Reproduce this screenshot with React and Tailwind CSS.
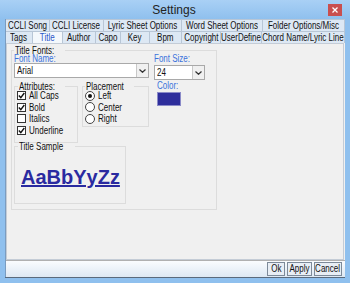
import React from "react";

const F = { fontFamily: '"Liberation Sans", Arial, sans-serif' };

function T({ children, c = false }) {
  return (
    <span className={`inline-block whitespace-nowrap scale-x-[0.8] ${c ? "origin-center" : "origin-left"}`}>
      {children}
    </span>
  );
}

function Check({ on, label }) {
  return (
    <div className="flex items-center h-[11.5px] gap-[3px]">
      <div className="w-[9px] h-[9px] border border-[#333] bg-white flex items-center justify-center">
        {on && (
          <svg width="7" height="7" viewBox="0 0 7 7">
            <path d="M0.8 3.5 L2.8 5.6 L6.3 1" stroke="#111" strokeWidth="1.4" fill="none" />
          </svg>
        )}
      </div>
      <span className="text-[10px] leading-[9px] text-[#111]"><T>{label}</T></span>
    </div>
  );
}

function Radio({ on, label }) {
  return (
    <div className="flex items-center h-[11.5px] gap-[3px]">
      <div className="w-[10px] h-[10px] rounded-full border border-[#444] bg-white flex items-center justify-center">
        {on && <div className="w-[4px] h-[4px] rounded-full bg-[#111]" />}
      </div>
      <span className="text-[10px] leading-[9px] text-[#111]"><T>{label}</T></span>
    </div>
  );
}

function Select({ value, w }) {
  return (
    <div className={`${w} h-[15px] bg-white border border-[#a9a9a9] flex items-center`}>
      <span className="flex-1 pl-[2px] text-[10px] leading-none text-[#111]"><T>{value}</T></span>
      <div className="w-[12px] h-[13px] border-l border-[#c8c8c8] bg-[#f0f0f0] flex items-center justify-center">
        <svg width="7" height="4" viewBox="0 0 7 4">
          <path d="M0.5 0.5 L3.5 3.3 L6.5 0.5" stroke="#333" strokeWidth="1.2" fill="none" />
        </svg>
      </div>
    </div>
  );
}

function Tab({ w, label, sel }) {
  return (
    <div
      className={`${w} h-[12px] flex items-center justify-center border-r border-t border-[#b8c6d6] text-[10px] leading-none ${
        sel ? "bg-[#f4f8fc] text-[#2b55c8]" : "bg-[#dde8f4] text-[#111]"
      }`}
    >
      <T c>{label}</T>
    </div>
  );
}

function Legend({ children, left = "left-[3px]" }) {
  return (
    <span className={`absolute ${left} top-[-4px] h-[8px] bg-[#f0f0f0] px-[1px] text-[10px] leading-[8px] text-[#111]`}>
      <T>{children}</T>
    </span>
  );
}

function Btn({ w, children }) {
  return (
    <div className={`${w} h-[14px] border border-[#7d8a99] bg-[#e8eef5] flex items-center justify-center text-[10px] leading-none text-[#111]`}>
      <T c>{children}</T>
    </div>
  );
}

export default function App() {
  return (
    <div style={F} className="w-[350px] h-[283px] bg-[#8fc0ee] flex flex-col overflow-hidden">
      <div className="h-[19px] shrink-0 relative flex items-center justify-center bg-gradient-to-b from-[#a9d0f5] to-[#8fc0ee]">
        <span className="text-[12px] leading-none text-[#222] ml-[-2px]">Settings</span>
        <div className="absolute right-[8px] top-[4px] w-[14px] h-[12px] bg-[#c94f4f] flex items-center justify-center">
          <svg width="6" height="6" viewBox="0 0 6 6">
            <path d="M0.5 0.5 L5.5 5.5 M5.5 0.5 L0.5 5.5" stroke="#fff" strokeWidth="1.3" />
          </svg>
        </div>
      </div>
      <div className="ml-[5px] mr-[5px] flex-1 flex flex-col bg-[#f0f0f0] border-l border-[#7a9cc0]">
        <div className="flex">
          <Tab w="w-[44px]" label="CCLI Song" />
          <Tab w="w-[54px]" label="CCLI License" />
          <Tab w="w-[78px]" label="Lyric Sheet Options" />
          <Tab w="w-[81px]" label="Word Sheet Options" />
          <Tab w="w-[82px]" label="Folder Options/Misc" />
        </div>
        <div className="flex">
          <Tab w="w-[27px]" label="Tags" />
          <Tab w="w-[30px]" label="Title" sel />
          <Tab w="w-[33px]" label="Author" />
          <Tab w="w-[25px]" label="Capo" />
          <Tab w="w-[29px]" label="Key" />
          <Tab w="w-[32px]" label="Bpm" />
          <Tab w="w-[39px]" label="Copyright" />
          <Tab w="w-[41px]" label="UserDefine" />
          <Tab w="w-[83px]" label="Chord Name/Lyric Line" />
        </div>
        <div className="flex-1 mr-[1px] border border-[#c4ccd6] bg-[#f0f0f0] pt-[6px] pl-[4px]">
          <div className="w-[206px] h-[160px] border border-[#dcdcdc] relative pl-[2px] pt-[4px]">
            <Legend left="left-[2px]">Title Fonts:</Legend>
            <div className="flex">
              <div className="flex flex-col">
                <span className="text-[10px] leading-[8px] text-[#3a72dc] h-[8px]"><T>Font Name:</T></span>
                <Select value="Arial" w="w-[135px]" />
              </div>
              <div className="flex flex-col ml-[5px]">
                <span className="text-[10px] leading-[8px] text-[#3a72dc] h-[10px]"><T>Font Size:</T></span>
                <Select value="24" w="w-[51px]" />
              </div>
            </div>
            <div className="flex mt-[6px]">
              <div className="w-[64px] h-[57px] border border-[#dcdcdc] relative pt-[3px] pl-[2px]">
                <Legend left="left-[3px]">Attributes:</Legend>
                <Check on label="All Caps" />
                <Check on label="Bold" />
                <Check label="Italics" />
                <Check on label="Underline" />
              </div>
              <div className="w-[67px] h-[41px] ml-[4px] border border-[#dcdcdc] relative pt-[3px] pl-[2px]">
                <Legend left="left-[2px]">Placement</Legend>
                <Radio on label="Left" />
                <Radio label="Center" />
                <Radio label="Right" />
              </div>
              <div className="ml-[8px] flex flex-col">
                <span className="text-[10px] leading-[8px] text-[#3a72dc] mt-[-4px]"><T>Color:</T></span>
                <div className="w-[24px] h-[14px] mt-[2px] bg-[#2e2e9c] border border-[#8a8ac8]" />
              </div>
            </div>
            <div className="w-[112px] h-[58px] mt-[3px] border border-[#dcdcdc] relative">
              <Legend left="left-[3px]">Title Sample</Legend>
              <div className="pl-[6px] pt-[20px] text-[20px] leading-none font-bold underline text-[#2a2aa0]">AaBbYyZz</div>
            </div>
          </div>
        </div>
        <div className="h-[17px] shrink-0 flex items-start pt-[1px] justify-end pr-[3px] gap-[2px] bg-gradient-to-b from-[#fafcfe] to-[#dde8f3] border-t border-[#b0b0b0]">
          <Btn w="w-[18px]">Ok</Btn>
          <Btn w="w-[25px]">Apply</Btn>
          <Btn w="w-[28px]">Cancel</Btn>
        </div>
      </div>
      <div className="h-[6px] shrink-0 ml-[5px] mr-[5px] border-t border-[#5a6a7c] bg-[#8fc0ee]" />
    </div>
  );
}
